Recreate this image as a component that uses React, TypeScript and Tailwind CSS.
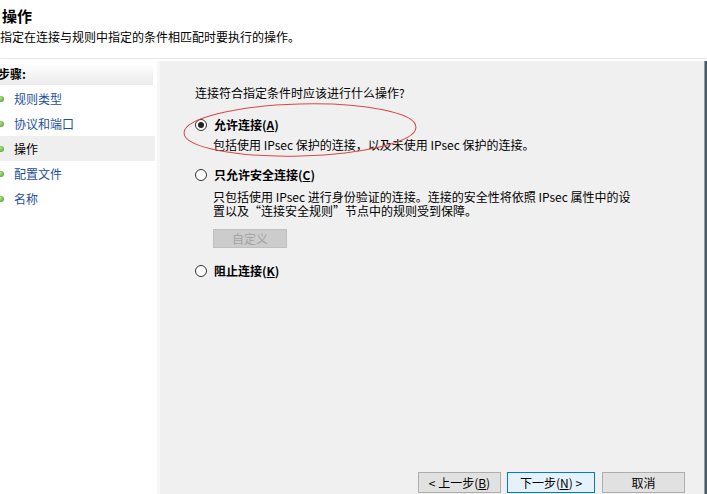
import React from 'react'

const Radio = ({ checked }: { checked?: boolean }) => (
  <span className="flex h-[12px] w-[12px] shrink-0 items-center justify-center rounded-full border border-[#333] bg-white">
    {checked && <span className="h-[6px] w-[6px] rounded-full bg-[#222]" />}
  </span>
)

const steps = [
  { label: '规则类型', active: false },
  { label: '协议和端口', active: false },
  { label: '操作', active: true },
  { label: '配置文件', active: false },
  { label: '名称', active: false },
]

const Bullet = () => (
  <span className="absolute left-[-2px] top-1/2 h-[6px] w-[6px] -translate-y-1/2 rounded-full bg-[radial-gradient(circle_at_35%_35%,#b6e38e,#3d9a1f)]" />
)

const App = () => {
  return (
    <div
      className="relative flex h-[494px] w-[707px] flex-col overflow-hidden bg-white text-[12px] text-black"
      style={{ fontFamily: '"Noto Sans CJK SC", "Liberation Sans", sans-serif' }}
    >
      {/* header */}
      <div className="h-[59px] shrink-0 border-b border-[#e6e6e6] pl-[2px] pt-[7px]">
        <h1 className="text-[15px] font-bold leading-[18px]">操作</h1>
        <p className="-ml-[2px] mt-[4px] leading-[16px]">指定在连接与规则中指定的条件相匹配时要执行的操作。</p>
      </div>

      <div className="flex flex-1 pt-[2px]">
        {/* steps */}
        <div className="w-[157px] shrink-0 bg-white">
          <div className="mt-[2px] flex h-[22px] w-[153px] items-center border-b border-[#ececec] bg-gradient-to-b from-white to-[#ececec] font-bold leading-[14px]">
            <span className="-ml-[2px]">步骤:</span>
          </div>
          <ul className="mt-[1px]">
            {steps.map((s) => (
              <li
                key={s.label}
                className={`relative flex h-[25px] w-[155px] items-center pl-[14px] ${
                  s.active ? 'bg-[#efefef] text-black' : 'text-[#1c4f9e]'
                }`}
              >
                <Bullet />
                {s.label}
              </li>
            ))}
          </ul>
        </div>
        <div className="w-[3px] shrink-0 bg-[#f7f7f7]" />

        {/* content */}
        <div className="relative flex flex-1 flex-col border-r border-[#9a9a9a] bg-[#f0f0f0]">
          <svg className="pointer-events-none absolute left-[22px] top-[41px]" width="238" height="58" viewBox="0 0 238 58">
            <ellipse cx="118" cy="28" rx="116" ry="26" fill="none" stroke="#d94848" strokeWidth="1" transform="rotate(-1.5 118 28)" />
          </svg>

          <div className="pl-[35px] pt-[25px]">
            <p className="leading-[14px]">连接符合指定条件时应该进行什么操作?</p>

            <div className="mt-[18px] flex items-center gap-[7px]">
              <Radio checked />
              <span className="font-bold leading-[14px]">
                允许连接(<span className="underline">A</span>)
              </span>
            </div>
            <p className="ml-[18px] mt-[6px] leading-[14px]">包括使用 IPsec 保护的连接，以及未使用 IPsec 保护的连接。</p>

            <div className="mt-[16px] flex items-center gap-[7px]">
              <Radio />
              <span className="font-bold leading-[14px]">
                只允许安全连接(<span className="underline">C</span>)
              </span>
            </div>
            <p className="ml-[18px] mt-[8px] leading-[14px]">
              只包括使用 IPsec 进行身份验证的连接。连接的安全性将依照 IPsec 属性中的设
              <br />
              置以及“连接安全规则”节点中的规则受到保障。
            </p>
            <button
              disabled
              className="ml-[18px] mt-[11px] flex h-[19px] w-[74px] items-center justify-center border border-[#bfbfbf] bg-[#cccccc] leading-[12px] text-[#a3a3a3]"
            >
              自定义
            </button>

            <div className="mt-[16px] flex items-center gap-[7px]">
              <Radio />
              <span className="font-bold leading-[14px]">
                阻止连接(<span className="underline">K</span>)
              </span>
            </div>
          </div>

          <div className="mt-auto mb-[1px] flex justify-end gap-[6px] pr-[19px]">
            <button className="flex h-[21px] w-[83px] items-center justify-center border border-[#adadad] bg-[#e1e1e1] leading-[12px]">
              &lt; 上一步(<span className="underline">B</span>)
            </button>
            <button className="flex h-[21px] w-[88px] items-center justify-center border border-[#0078d7] bg-[#e5f1fb] leading-[12px]">
              下一步(<span className="underline">N</span>) &gt;
            </button>
            <button className="ml-[1px] flex h-[21px] w-[83px] items-center justify-center border border-[#adadad] bg-[#e1e1e1] leading-[12px]">
              取消
            </button>
          </div>
        </div>
        <div className="w-[2px] shrink-0 bg-[#4a5a6e]" />
      </div>
    </div>
  )
}

export default App
